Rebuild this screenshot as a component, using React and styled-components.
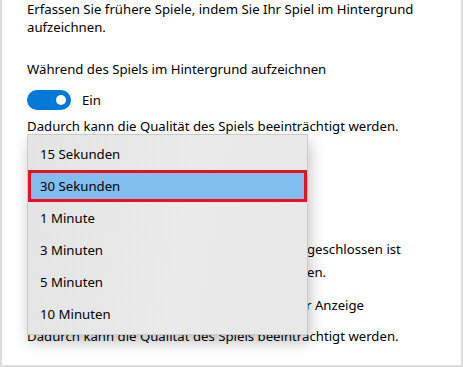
import React from "react";
import styled, { createGlobalStyle } from "styled-components";

const GlobalStyle = createGlobalStyle`
  html, body {
    margin: 0;
    padding: 0;
    background: #ffffff;
  }
  body {
    font-family: "Noto Sans", "Segoe UI", sans-serif;
    color: #000000;
  }
`;

const Frame = styled.div`
  position: relative;
  box-sizing: border-box;
  width: 463px;
  height: 367px;
  overflow: hidden;
  background: #ffffff;
  border: 2px solid #dcdcdc;
  border-top: none;
`;

const Content = styled.div`
  display: flex;
  flex-direction: column;
  padding: 0 0 0 25px;
`;

const Text = styled.p`
  margin: ${(p) => p.$mt || 0}px 0 0 0;
  font-size: 13.2px;
  line-height: 18px;
  white-space: ${(p) => (p.$nowrap ? "nowrap" : "normal")};
  width: ${(p) => (p.$nowrap ? "auto" : "400px")};
`;

// part of a line that lies under the open menu
const Covered = styled.span`
  display: inline-block;
  visibility: hidden;
  width: ${(p) => p.$w}px;
`;

const ToggleRow = styled.div`
  display: flex;
  align-items: center;
  gap: 11px;
  margin-top: 12px;
  height: 20px;
  font-size: 13.2px;
`;

const Toggle = styled.div`
  position: relative;
  width: 44px;
  height: 20px;
  border-radius: 10px;
  background: #0078d7;
  &::after {
    content: "";
    position: absolute;
    right: 5px;
    top: 5px;
    width: 10px;
    height: 10px;
    border-radius: 50%;
    background: #ffffff;
  }
`;

const Spacer = styled.div`
  height: ${(p) => p.$h}px;
`;

const Menu = styled.ul`
  position: absolute;
  left: 25px;
  top: 134px;
  width: 281px;
  margin: 0;
  padding: 3px 0 4px;
  list-style: none;
  box-sizing: border-box;
  background: linear-gradient(100deg, #e4e4e4 0%, #eaeaea 55%, #e8e8e8 100%);
  border: 1px solid #cbcbcb;
  box-shadow: 2px 7px 14px rgba(0, 0, 0, 0.24);
`;

const Item = styled.li`
  box-sizing: border-box;
  height: 32px;
  display: flex;
  align-items: center;
  font-size: 13.2px;
  background: ${(p) => (p.$selected ? "#81bdef" : "transparent")};
  border: ${(p) => (p.$selected ? "3px solid #e81123" : "none")};
  padding-left: ${(p) => (p.$selected ? 9 : 12)}px;
`;

const options = [
  "15 Sekunden",
  "30 Sekunden",
  "1 Minute",
  "3 Minuten",
  "5 Minuten",
  "10 Minuten",
];

export default function App() {
  return (
    <>
      <GlobalStyle />
      <Frame>
        <Content>
          <Text>
            Erfassen Sie frühere Spiele, indem Sie Ihr Spiel im Hintergrund
            aufzeichnen.
          </Text>
          <Text $mt={24}>Während des Spiels im Hintergrund aufzeichnen</Text>
          <ToggleRow>
            <Toggle />
            <span>Ein</span>
          </ToggleRow>
          <Text $mt={7}>
            Dadurch kann die Qualität des Spiels beeinträchtigt werden.
          </Text>
          <Spacer $h={105} />
          <Text $nowrap>
            <Covered $w={280} />
            geschlossen ist
          </Text>
          <Text $mt={5} $nowrap>
            <Covered $w={280} />
            en.
          </Text>
          <Text $mt={15} $nowrap>
            <Covered $w={279} />r Anzeige
          </Text>
          <Text $mt={13} $nowrap>
            Dadurch kann die Qualität des Spiels beeinträchtigt werden.
          </Text>
        </Content>
        <Menu>
          {options.map((o) => (
            <Item key={o} $selected={o === "30 Sekunden"}>
              {o}
            </Item>
          ))}
        </Menu>
      </Frame>
    </>
  );
}
